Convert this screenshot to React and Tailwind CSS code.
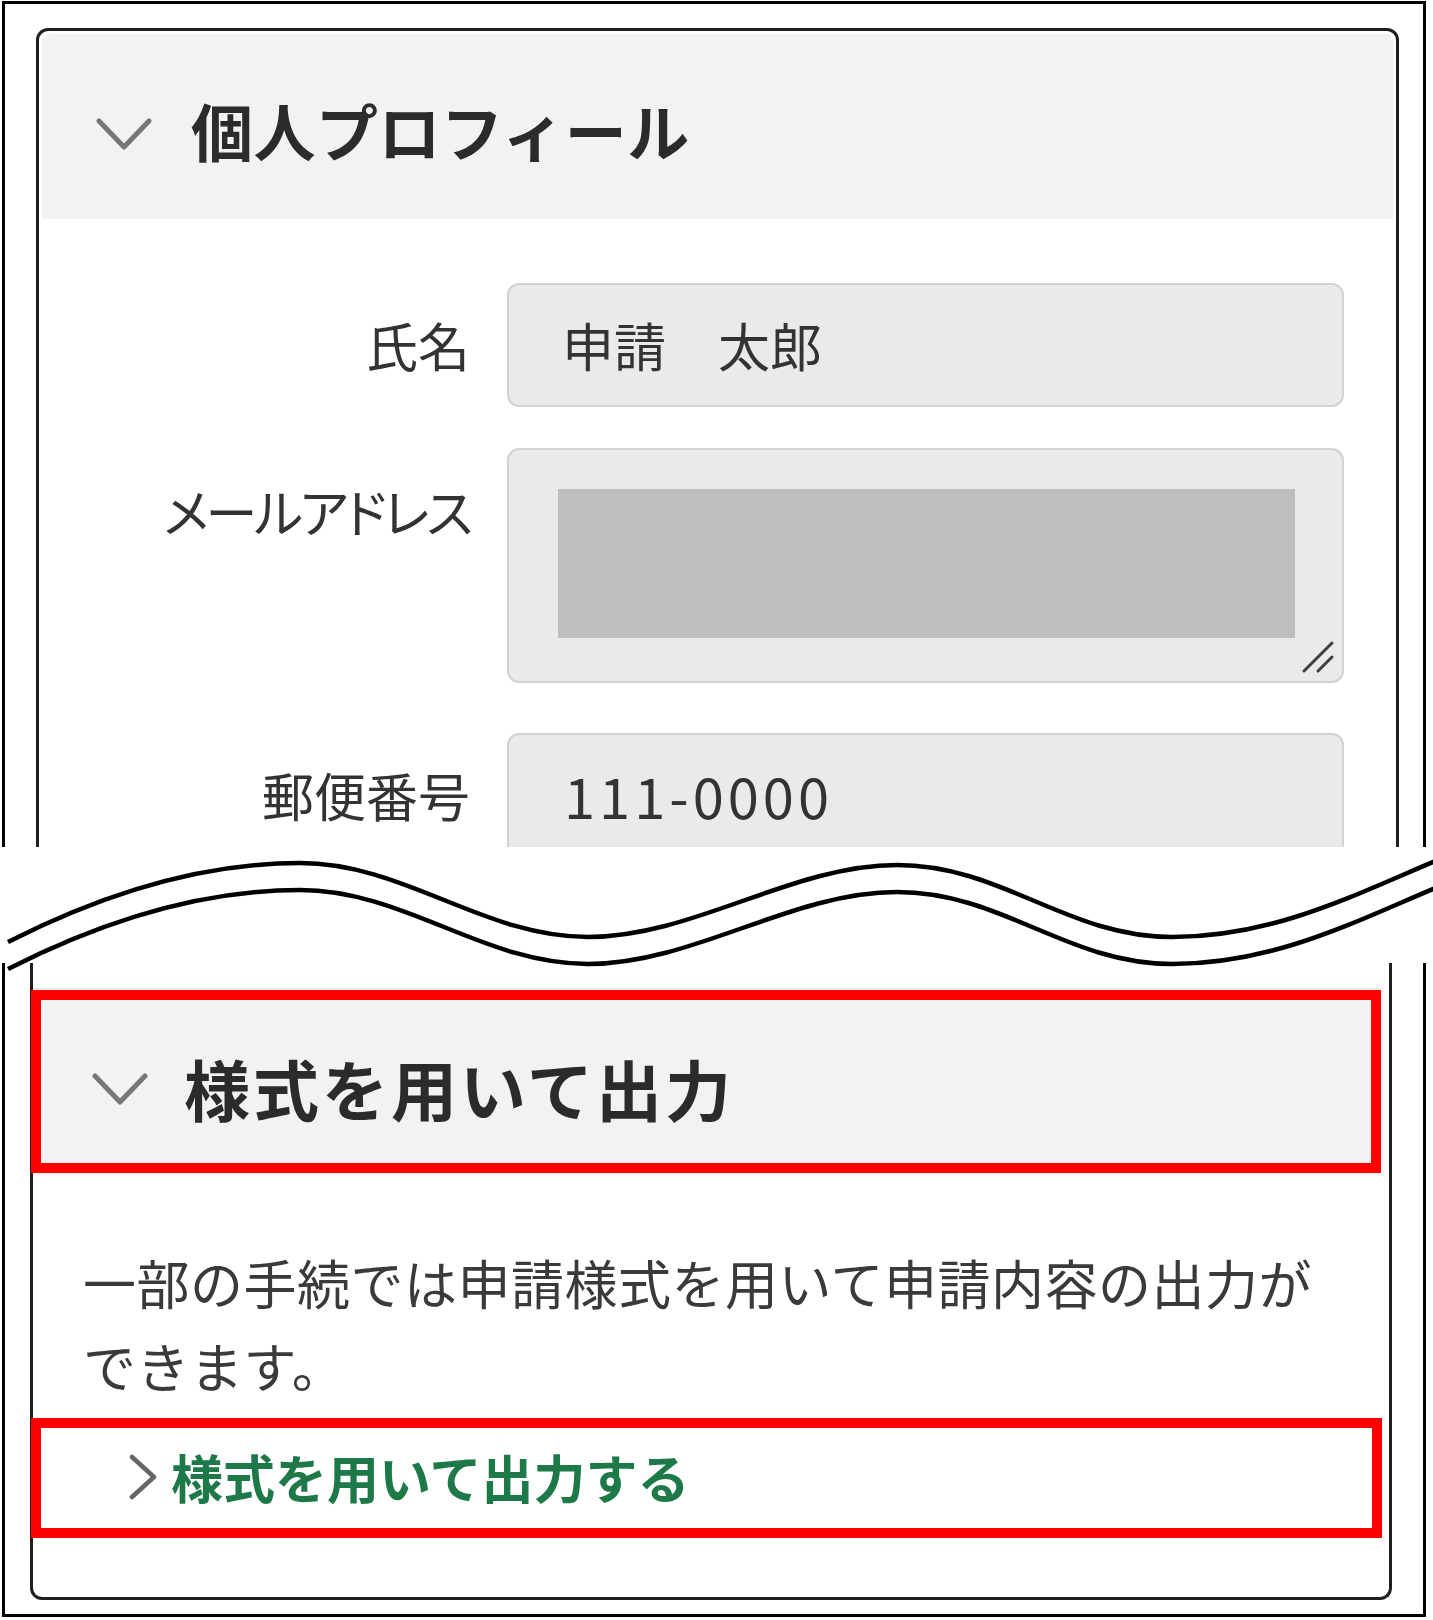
import React from "react";

const ChevronDown = ({ className }) => (
  <svg className={className} width="56" height="32" viewBox="0 0 56 32" fill="none">
    <polyline points="3,3 28,29 53,3" stroke="#777777" strokeWidth="5" strokeLinecap="round" strokeLinejoin="round" />
  </svg>
);

const ChevronRight = () => (
  <svg width="28" height="46" viewBox="0 0 28 46" fill="none" className="shrink-0">
    <polyline points="3,3 25,23 3,43" stroke="#666666" strokeWidth="4.5" strokeLinecap="round" strokeLinejoin="round" />
  </svg>
);

const wave =
  "M 8 942 C 110 890, 210 863, 300 863 C 405 863, 483 937, 588 937 C 693 937, 792 865, 897 865 C 1002 865, 1067 937, 1172 937 C 1277 937, 1360 892, 1445 857";

export default function App() {
  return (
    <div className="relative w-[1433px] h-[1620px] overflow-hidden bg-white font-['Noto_Sans_CJK_JP','Noto_Sans',sans-serif] text-[#333333]">
      {/* TOP SECTION */}
      <div className="h-[847px] overflow-hidden">
        <div className="ml-[2px] mt-[1px] w-[1424px] h-[900px] border-[3px] border-black pl-[31px] pr-[24px] pt-[24px]">
          <div className="h-[900px] border-[3px] border-[#1f1f1f] rounded-t-[12px] p-[3px] overflow-hidden">
            <div className="h-[185px] bg-[#f2f2f2] rounded-t-[8px] flex items-center pl-[54px]">
              <ChevronDown className="shrink-0 mt-[14px]" />
              <div className="ml-[39px] text-[62px] leading-none font-bold text-[#2b2b2b] mt-[6px] tracking-[0.5px]">個人プロフィール</div>
            </div>

            <div className="pt-[64px]">
              {/* Row 1 */}
              <div className="flex items-center">
                <div className="w-[428px] text-right text-[52px] leading-none">氏名</div>
                <div className="ml-[37px] w-[837px] h-[124px] border-2 border-[#d2d2d2] bg-[#e9eaec] rounded-[12px] pl-[53px] flex items-center text-[52px] leading-none">
                  申請　太郎
                </div>
              </div>

              {/* Row 2 */}
              <div className="flex items-start mt-[41px]">
                <div className="w-[428px] text-right text-[52px] leading-none pt-[37px] tracking-[-3px] [font-feature-settings:'palt']">メールアドレス</div>
                <div className="relative ml-[37px] w-[837px] h-[235px] border-2 border-[#d2d2d2] bg-[#e9eaec] rounded-[12px] pl-[49px] pt-[39px]">
                  <div className="w-[737px] h-[149px] bg-[#bebebe]" />
                  <svg className="absolute right-[7px] bottom-[7px]" width="34" height="34" viewBox="0 0 34 34" fill="none">
                    <line x1="3" y1="31" x2="31" y2="3" stroke="#3f3f3f" strokeWidth="3" strokeLinecap="round" />
                    <line x1="17" y1="31" x2="31" y2="17" stroke="#3f3f3f" strokeWidth="3" strokeLinecap="round" />
                  </svg>
                </div>
              </div>

              {/* Row 3 */}
              <div className="flex items-center mt-[50px]">
                <div className="w-[428px] text-right text-[52px] leading-none">郵便番号</div>
                <div className="ml-[37px] w-[837px] h-[124px] border-2 border-[#d2d2d2] bg-[#e9eaec] rounded-[12px] pl-[55px] flex items-center text-[56px] leading-none tracking-[4px]">
                  111-0000
                </div>
              </div>
            </div>
          </div>
        </div>
      </div>

      {/* WAVE BREAK */}
      <div className="relative h-[116px] bg-white z-10">
        <svg
          className="absolute left-0 top-[-17px] overflow-visible"
          width="1433"
          height="150"
          viewBox="0 830 1433 150"
          fill="none"
        >
          <path d={wave} stroke="#000" strokeWidth="4.5" />
          <path d={wave} stroke="#000" strokeWidth="4.5" transform="translate(0 27)" />
        </svg>
      </div>

      {/* BOTTOM SECTION */}
      <div className="relative h-[657px]">
        <div className="ml-[2px] w-[1424px] h-[654px] border-x-[3px] border-b-[3px] border-black pl-[25px] pr-[31px]">
          <div className="h-[637px] border-x-[3px] border-b-[3px] border-[#1f1f1f] rounded-b-[12px] pt-[25px]">
            <div className="mr-[8px] h-[186px] bg-[#f2f2f2] border-t border-[#e2e2e2] flex items-center pl-[59px]">
              <ChevronDown className="shrink-0 mt-[14px]" />
              <div className="ml-[36px] text-[66px] leading-none font-bold text-[#2b2b2b] mt-[10px] tracking-[3px]">様式を用いて出力</div>
            </div>

            <p className="mt-[67px] pl-[50px] text-[53px] leading-[83px] text-[#3a3a3a] tracking-[0.5px]">
              一部の手続では申請様式を用いて申請内容の出力が
              <br />
              できます。
            </p>

            <div className="mt-[10px] h-[120px] flex items-center pl-[96px]">
              <ChevronRight />
              <span className="ml-[14px] text-[52px] leading-none font-bold text-[#1d7a48]">様式を用いて出力する</span>
            </div>
          </div>
        </div>

        {/* annotation boxes */}
        <div className="absolute left-[31px] top-[27px] w-[1350px] h-[183px] border-[10px] border-[#ff0000]" />
        <div className="absolute left-[31px] top-[455px] w-[1351px] h-[120px] border-[10px] border-[#ff0000]" />
      </div>
    </div>
  );
}
